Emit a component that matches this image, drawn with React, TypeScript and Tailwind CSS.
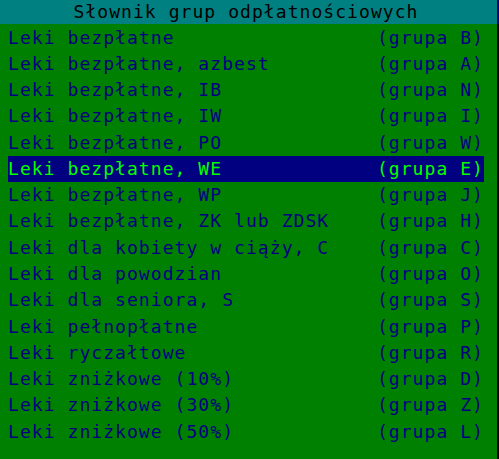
const groups = [
  ['Leki bezpłatne', 'B'],
  ['Leki bezpłatne, azbest', 'A'],
  ['Leki bezpłatne, IB', 'N'],
  ['Leki bezpłatne, IW', 'I'],
  ['Leki bezpłatne, PO', 'W'],
  ['Leki bezpłatne, WE', 'E'],
  ['Leki bezpłatne, WP', 'J'],
  ['Leki bezpłatne, ZK lub ZDSK', 'H'],
  ['Leki dla kobiety w ciąży, C', 'C'],
  ['Leki dla powodzian', 'O'],
  ['Leki dla seniora, S', 'S'],
  ['Leki pełnopłatne', 'P'],
  ['Leki ryczałtowe', 'R'],
  ['Leki zniżkowe (10%)', 'D'],
  ['Leki zniżkowe (30%)', 'Z'],
  ['Leki zniżkowe (50%)', 'L'],
]

const selected = 5

export default function App() {
  return (
    <div className="flex w-[499px] h-[459px] overflow-hidden font-['DejaVu_Sans_Mono',monospace] text-[18px] tracking-[1.06px]">
      <div className="flex flex-1 flex-col bg-[#008000]">
        <div className="h-[24px] leading-[24px] bg-[#008080] text-black pl-[8px] pr-[13px] text-center whitespace-pre">
          Słownik grup odpłatnościowych
        </div>
        <div className="flex flex-col pl-[8px] pr-[13px] pt-[0.6px]">
          {groups.map(([name, group], i) => (
            <div
              key={name}
              className={
                'flex justify-between h-[26.27px] leading-[26.27px] whitespace-pre ' +
                (i === selected ? 'bg-[#000080] text-[#00ff00]' : 'text-[#000080]')
              }
            >
              <span>{name}</span>
              <span>(grupa {group})</span>
            </div>
          ))}
        </div>
      </div>
      <div className="flex w-[2px] flex-col">
        <div className="h-[24px] bg-[#000080]"></div>
        <div className="flex-1 bg-black"></div>
      </div>
    </div>
  )
}
